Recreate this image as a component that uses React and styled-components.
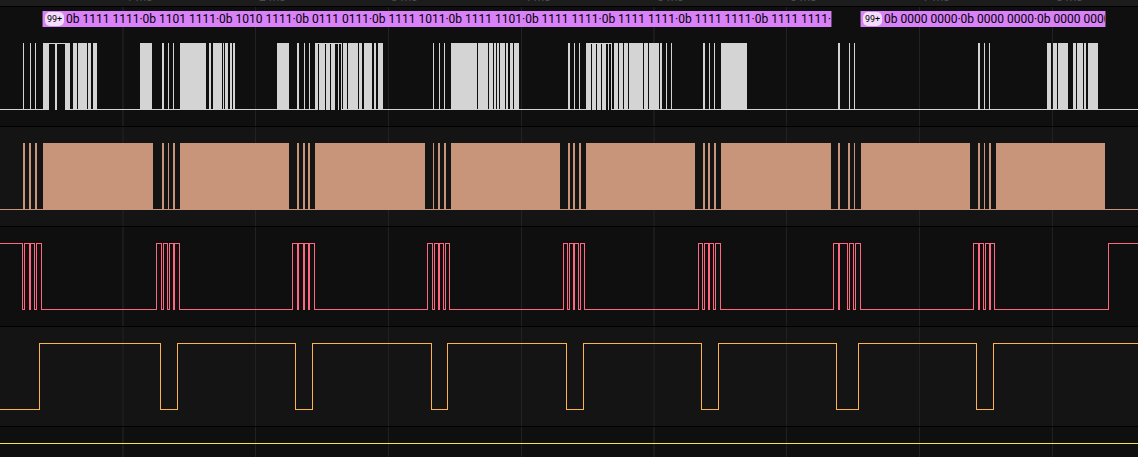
import React from "react";
import styled, { createGlobalStyle } from "styled-components";

const SPAN = 1138;
const LEVEL = 67;

const GlobalStyle = createGlobalStyle`
  * { box-sizing: border-box; }
  body { margin: 0; background: #0f0f0f; font-family: Roboto, sans-serif; }
`;

const Viewer = styled.main`
  height: 100vh;
  overflow: hidden;
  display: flex;
  flex-direction: column;
  background: #0f0f0f;
`;

const Ruler = styled.header`
  flex: none;
  display: flex;
  align-items: flex-end;
  height: 7px;
  overflow: hidden;
  position: relative;
  background: #1c1c1c;
  border-bottom: 1px solid #000;
`;

const Ticks = styled.div`
  flex: 1;
  display: grid;
  grid-template-columns: 126fr 133fr 132fr 133fr 133fr 133fr 133fr 133fr 82fr;
  padding-bottom: 2px;
`;

const Tick = styled.span`
  min-width: 0;
  font-size: 12px;
  line-height: 14px;
  color: #4c4c4c;
  white-space: nowrap;
`;

const Channel = styled.section`
  flex: none;
  position: relative;
  padding: ${(p) => (p.$decoded ? "4px" : "16px")} 0 16px;
  background: ${(p) => (p.$alt ? "#141414" : "#0f0f0f")};
  border-bottom: 1px solid #000;
`;

const GridLayer = styled.svg`
  position: absolute;
  inset: 0;
  width: 100%;
  height: 100%;
`;

const Wave = styled.svg`
  display: block;
  position: relative;
  width: 100%;
  height: ${LEVEL}px;
  color: ${(p) => p.$color};
`;

const DecoderLane = styled.div`
  position: relative;
  display: grid;
  grid-template-columns: 42fr 790fr 28fr 246fr 32fr;
  height: 16px;
  margin-bottom: 16px;
`;

const Frame = styled.div`
  grid-column: ${(p) => p.$column};
  min-width: 0;
  display: flex;
  align-items: center;
  gap: 2px;
  padding-left: 2px;
  overflow: hidden;
  background: #d881f8;
  border: solid #65486f;
  border-width: 0 1px;
`;

const Count = styled.span`
  flex: none;
  width: 19px;
  height: 14px;
  border-radius: 5px;
  background: #f4dcfd;
  color: #000;
  font-size: 9px;
  line-height: 14px;
  text-align: center;
`;

const Bits = styled.span`
  font-size: 12px;
  line-height: 16px;
  color: #000;
  white-space: nowrap;
`;

const gridLines = [
  [122, 2], [255, 1], [388, 1], [521, 1], [653, 2], [786, 1], [919, 1], [1052, 1],
];

function Grid() {
  return (
    <GridLayer viewBox={`0 0 ${SPAN} 100`} preserveAspectRatio="none" shapeRendering="crispEdges" aria-hidden="true">
      {gridLines.map(([x, w]) => (
        <rect key={x} x={x} y="0" width={w} height="100" fill={w === 2 ? "#1b1b1b" : "#222"} />
      ))}
    </GridLayer>
  );
}

/* Fast signal: pulses are solid blocks; `held` spans stay high without returning to the base. */
function Pulses({ label, color, bars, held = [] }) {
  const block = ([a, b], y1, y2) => `M${a} ${y1}H${b}V${y2}H${a}Z`;
  let x = 0;
  const base = [];
  held.forEach(([a, b]) => {
    base.push([x, a]);
    x = b;
  });
  base.push([x, SPAN]);
  const d = [
    ...bars.map((b) => block(b, 0, LEVEL)),
    ...held.map((b) => block(b, 0, 1)),
    ...base.map((b) => block(b, LEVEL - 1, LEVEL)),
  ].join("");
  return (
    <Wave $color={color} viewBox={`0 0 ${SPAN} ${LEVEL}`} preserveAspectRatio="none" shapeRendering="crispEdges" role="img" aria-label={label}>
      <path d={d} fill="currentColor" />
    </Wave>
  );
}

/* Slow signal: an outline that toggles at each listed position. */
function Levels({ label, color, startHigh, edges = [] }) {
  let high = startHigh;
  const y = () => (high ? 0.5 : LEVEL - 0.5);
  let d = `M0 ${y()}`;
  edges.forEach((x) => {
    d += `H${x + 0.5}`;
    high = !high;
    d += `V${y()}`;
  });
  d += `H${SPAN}`;
  return (
    <Wave $color={color} viewBox={`0 0 ${SPAN} ${LEVEL}`} preserveAspectRatio="none" shapeRendering="crispEdges" role="img" aria-label={label}>
      <path d={d} fill="none" stroke="currentColor" strokeWidth="1" />
    </Wave>
  );
}

const dataBars = [
  [23, 24], [30, 31], [35, 36], [43, 49], [55, 57], [65, 70], [73, 77], [78, 87], [88, 91], [93, 97],
  [140, 152], [162, 164], [168, 169], [173, 174], [180, 206], [209, 211], [213, 222], [223, 224],
  [225, 228], [230, 232], [233, 235], [277, 289], [297, 299], [304, 305], [309, 310], [315, 318],
  [319, 325], [326, 330], [331, 335], [338, 339], [341, 342], [343, 347], [348, 358], [359, 362],
  [364, 372], [374, 376], [378, 383], [433, 434], [439, 440], [444, 445], [451, 477], [478, 488],
  [489, 493], [494, 496], [497, 499], [500, 505], [506, 508], [510, 513], [514, 519], [568, 570],
  [574, 575], [579, 580], [586, 591], [592, 596], [597, 601], [602, 606], [608, 609], [611, 612],
  [614, 618], [619, 623], [624, 628], [629, 643], [644, 648], [649, 659], [660, 662], [666, 667],
  [671, 672], [703, 705], [709, 710], [714, 715], [721, 747], [838, 840], [849, 850], [854, 855],
  [978, 980], [984, 985], [989, 990], [1047, 1051], [1053, 1057], [1058, 1068], [1073, 1076],
  [1077, 1083], [1084, 1086], [1088, 1098],
];

const dataHeld = [
  [49, 55], [57, 65], [318, 319], [325, 326], [330, 331], [335, 338], [339, 341],
  [591, 592], [596, 597], [601, 602], [606, 608], [609, 611],
];

const clockBars = [
  [23, 25], [29, 31], [35, 37], [43, 153], [162, 164], [168, 169], [173, 175], [180, 289],
  [297, 299], [303, 305], [308, 310], [315, 425], [433, 434], [438, 440], [444, 446], [451, 560],
  [568, 570], [573, 575], [579, 581], [586, 695], [703, 705], [708, 710], [714, 716], [721, 831],
  [838, 840], [848, 850], [854, 855], [861, 970], [978, 980], [984, 985], [989, 991], [996, 1105],
];

const selectEdges = [
  22, 24, 29, 30, 34, 36, 41, 156, 161, 163, 167, 169, 173, 174, 179, 292, 297, 298, 303, 304, 308,
  309, 314, 427, 432, 434, 438, 439, 443, 445, 449, 563, 567, 569, 573, 574, 578, 580, 584, 698,
  702, 704, 708, 709, 713, 715, 720, 833, 838, 839, 847, 849, 853, 855, 860, 973, 978, 979, 983,
  985, 989, 990, 994, 1108,
];

const modeEdges = [39, 160, 177, 295, 312, 431, 447, 566, 583, 701, 718, 836, 858, 976, 993];

const frames = [
  {
    column: 2,
    bytes: [
      "1111 1111", "1101 1111", "1010 1111", "0111 0111", "1111 1011",
      "1111 1101", "1111 1111", "1111 1111", "1111 1111", "1111 1111",
    ],
  },
  { column: 4, bytes: ["0000 0000", "0000 0000", "0000 0000"] },
];

export default function App() {
  return (
    <Viewer>
      <GlobalStyle />
      <Ruler>
        <Ticks>
          <span />
          {[1, 2, 3, 4, 5, 6, 7, 8].map((n) => (
            <Tick key={n}>{n} ms</Tick>
          ))}
        </Ticks>
      </Ruler>
      <Channel $decoded>
        <Grid />
        <DecoderLane>
          {frames.map((f) => (
            <Frame key={f.column} $column={f.column}>
              <Count>99+</Count>
              <Bits>{f.bytes.map((b) => `0b ${b}·`).join("")}</Bits>
            </Frame>
          ))}
        </DecoderLane>
        <Pulses label="Data" color="#d4d4d4" bars={dataBars} held={dataHeld} />
      </Channel>
      <Channel $alt>
        <Grid />
        <Pulses label="Clock" color="#c8957a" bars={clockBars} />
      </Channel>
      <Channel>
        <Grid />
        <Levels label="Select" color="#ff6680" startHigh edges={selectEdges} />
      </Channel>
      <Channel $alt>
        <Grid />
        <Levels label="Mode" color="#ffb04f" edges={modeEdges} />
      </Channel>
      <Channel>
        <Grid />
        <Levels label="Enable" color="#f8e152" startHigh />
      </Channel>
    </Viewer>
  );
}
